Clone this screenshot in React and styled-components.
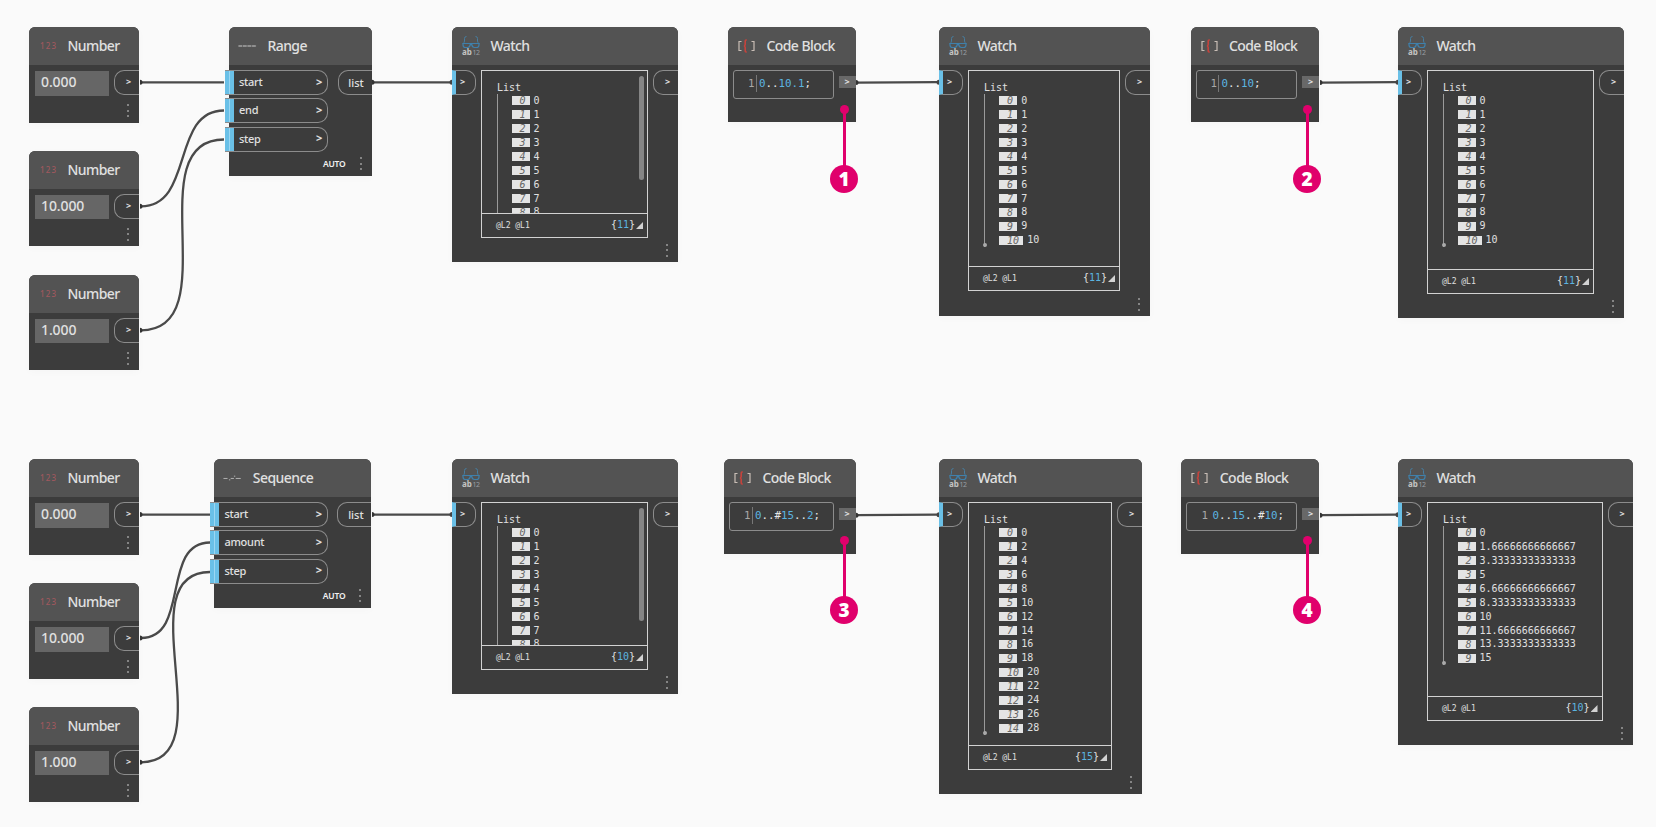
import React from "react";
import styled, { createGlobalStyle, css } from "styled-components";

const C = {
  page: "#fafafa",
  head: "#535353",
  body: "#3c3c3c",
  line: "#8c8c8c",
  wire: "#4a4a4a",
  blue: "#6ac0e7",
  text: "#e0e0e0",
  pink: "#e0006c",
};
const UI = `"Noto Sans", "Open Sans", sans-serif`;
const MONO = `"DejaVu Sans Mono", "Liberation Mono", monospace`;

const Global = createGlobalStyle`
  * { box-sizing: border-box; }
  body { margin: 0; background: ${C.page}; font-family: ${UI}; color: ${C.text}; }
`;

const Canvas = styled.main`
  position: relative;
  width: 1656px;
  height: 827px;
  overflow: hidden;
  background: ${C.page};
`;

const NodeCard = styled.section`
  position: absolute;
  left: ${(p) => p.$x}px;
  top: ${(p) => p.$y}px;
  width: ${(p) => p.$w}px;
  height: ${(p) => p.$h}px;
  display: flex;
  flex-direction: column;
  background: ${C.body};
  border-radius: 6px 6px 0 0;
  box-shadow: 0 2px 8px rgba(0, 0, 0, 0.025);
`;

const Header = styled.header`
  display: flex;
  align-items: center;
  flex: none;
  height: 38px;
  padding-left: 9px;
  background: ${C.head};
  border-radius: 6px 6px 0 0;
`;

const IconBox = styled.div`
  display: flex;
  width: 20px;
  height: 20px;
  margin-right: 9.4px;
`;

const Title = styled.h2`
  margin: 0;
  font-size: 14px;
  line-height: 20px;
  font-weight: 500;
  letter-spacing: -0.55px;
  white-space: nowrap;
`;

const Body = styled.div`
  display: flex;
  flex: 1;
  align-items: flex-start;
  justify-content: space-between;
  padding: ${(p) => p.$pad ?? "5px 0 0"};
`;

const portBase = css`
  display: flex;
  align-items: center;
  height: 25px;
  padding-bottom: 1px;
  border: 1px solid ${C.line};
  flex: none;
`;

const OutPort = styled.div`
  ${portBase}
  width: ${(p) => p.$w ?? 25}px;
  justify-content: center;
  padding-left: ${(p) => (p.$w ? 2 : 3)}px;
  border-right: 0;
  border-radius: 10px 0 0 10px;
  font-size: 11px;
  font-weight: 500;
`;

const InPort = styled.div`
  ${portBase}
  width: 24px;
  padding-left: 4px;
  border-left: 4px solid ${C.blue};
  border-radius: 0 10px 10px 0;
`;

const Arrow = styled.span`
  font-family: ${UI};
  font-size: ${(p) => p.$size ?? 9}px;
  line-height: 12px;
  font-weight: 700;
`;

const PortList = styled.div`
  display: flex;
  flex-direction: column;
  gap: 3.4px;
  margin-left: -4px;
`;

const NamedPort = styled.div`
  ${portBase}
  justify-content: space-between;
  width: ${(p) => p.$w}px;
  padding: 0 5px 2px 5px;
  border-left: 0;
  border-radius: 0 10px 10px 0;
  font-size: 11px;
  font-weight: 500;
  letter-spacing: -0.25px;
`;

const PortTab = styled.i`
  align-self: stretch;
  width: 9px;
  margin: 0 5px -2px -5px;
  background: linear-gradient(90deg, ${C.blue} 4px, #9bd6f2 4px, #9bd6f2 5px, ${C.blue} 5px);
`;

const PortLabel = styled.span`
  flex: 1;
`;

const NumberField = styled.div`
  width: 73.5px;
  height: 24.5px;
  margin-top: 1px;
  padding-left: 6px;
  background: #666;
  font-size: 14px;
  line-height: 21px;
  font-weight: 500;
  letter-spacing: -0.1px;
`;

const Foot = styled.footer`
  display: flex;
  flex: none;
  justify-content: flex-end;
  align-items: center;
  height: 24px;
  padding-right: 10px;
  gap: 14px;
  font-size: 8.5px;
  font-weight: 600;
  letter-spacing: -0.2px;
  color: #f2f2f2;
`;

const Kebab = styled.div`
  display: flex;
  flex-direction: column;
  gap: 3.5px;
  i {
    width: 2px;
    height: 2px;
    background: #858585;
  }
`;

const Panel = styled.div`
  display: flex;
  flex-direction: column;
  flex: 1;
  height: ${(p) => p.$h}px;
  margin: 0 5px;
  border: 1px solid #d2d2d2;
  font-family: ${MONO};
`;

const Tree = styled.div`
  display: flex;
  justify-content: space-between;
  flex: 1;
  min-height: 0;
  overflow: hidden;
  padding: 10px 3px 0 15px;
`;

const TreeTitle = styled.div`
  height: 13px;
  padding-left: 0;
  font-size: 10px;
  line-height: 14px;
`;

const Rows = styled.div`
  position: relative;
  padding: 0 0 0 13.5px;
  border-left: 1px solid #9a9a9a;
`;

const EndDot = styled.i`
  position: absolute;
  left: -2.5px;
  bottom: 0;
  width: 4px;
  height: 4px;
  border-radius: 50%;
  background: #aaa;
`;

const Row = styled.div`
  display: flex;
  align-items: center;
  gap: 4px;
  height: 13.95px;
  font-size: 10px;
  line-height: 14px;
  white-space: nowrap;
`;

const Index = styled.em`
  height: 9px;
  padding: 0 4px 0 ${(p) => p.$pad}px;
  background: #e4e4e4;
  color: #666;
  line-height: 9px;
`;

const Scrollbar = styled.i`
  flex: none;
  width: 5px;
  height: ${(p) => p.$h}px;
  margin-top: -5px;
  border-radius: 3px;
  background: #858585;
`;

const PanelFoot = styled.div`
  display: flex;
  align-items: center;
  flex: none;
  height: 24px;
  padding: 0 4px 0 14px;
  border-top: 1px solid #d2d2d2;
  font-size: 8px;
`;

const Count = styled.span`
  margin-left: auto;
  padding-bottom: 2px;
  font-size: 10px;
  b {
    font-weight: 400;
    color: #5bb4e0;
  }
`;

const Grip = styled.i`
  width: 7px;
  height: 7px;
  margin-left: 1px;
  background: #d2d2d2;
  clip-path: polygon(100% 0, 100% 100%, 0 100%);
`;

const CodeBox = styled.div`
  display: flex;
  flex: 1;
  align-items: center;
  height: 29px;
  padding: 0 0 3px ${(p) => p.$indent}px;
  margin-right: 5px;
  border: 1px solid #8c8c8c;
  border-radius: 3px;
  font-family: ${MONO};
  font-size: 10.8px;
  color: #e8e8e8;
  b {
    font-weight: 400;
    color: #5bb4e0;
  }
`;

const LineNo = styled.span`
  padding-right: 1px;
  margin-right: 2.5px;
  border-right: 1px solid ${(p) => (p.$rule ? "#777" : "transparent")};
  color: #a8a8a8;
  line-height: 17px;
`;

const CodePort = styled.div`
  display: flex;
  align-items: center;
  justify-content: center;
  width: 17px;
  height: 12px;
  margin-top: 6px;
  background: #686868;
`;

const Overlay = styled.svg`
  position: absolute;
  inset: 0;
  pointer-events: none;
`;

const Pin = styled.div`
  position: absolute;
  left: ${(p) => p.$x}px;
  top: ${(p) => p.$y}px;
  width: 28px;
  display: flex;
  flex-direction: column;
  align-items: center;
`;

const PinDot = styled.i`
  width: 9px;
  height: 9px;
  border-radius: 50%;
  background: ${C.pink};
`;

const PinStem = styled.i`
  width: 3px;
  height: ${(p) => p.$h}px;
  margin: -2px 0 -1px;
  background: ${C.pink};
`;

const PinBadge = styled.span`
  width: 28px;
  height: 28px;
  border-radius: 50%;
  background: ${C.pink};
  color: #fff;
  font-size: 19px;
  font-weight: 900;
  line-height: 28px;
  text-align: center;
`;

const WatchIcon = () => (
  <svg width="20" height="20" viewBox="0 0 20 20" fill="none">
    <path d="M5.500 0.500 Q3.500 0.500 3.500 2.500 V5 Q3.500 6.500 1.500 8 M14.500 0.500 Q16.500 0.500 16.500 2.500 V5 Q16.500 6.500 18.500 8" stroke="#477d9f" />
    <path d="M1.500 7.500 H18.500 M2 7.500 V9 Q2 11.500 4.500 11.500 H6.500 Q8.800 11.500 9.200 8.700 H10.800 Q11.200 11.500 13.500 11.500 H15.500 Q18 11.500 18 9 V7.500" stroke="#3f80ab" strokeWidth="1.200" />
    <text x="1" y="18.500" fontFamily="Noto Sans" fontSize="8" fontWeight="700" fill="#c4c4c4">ab</text>
    <text x="11.500" y="18.500" fontFamily="Noto Sans" fontSize="7" fill="#9a9fa3" textLength="7.500">12</text>
  </svg>
);

const NumberIcon = () => (
  <svg width="20" height="20" viewBox="0 0 20 20">
    <text x="2" y="12.800" fontFamily="Noto Sans" fontSize="8" fontWeight="500" fill="#a0585e" textLength="16">123</text>
  </svg>
);

const CodeIcon = () => (
  <svg width="20" height="20" viewBox="0 0 20 20" fill="none">
    <path d="M4.500 5.500 H2 V14.500 H4.500 M14.500 5.500 H17 V14.500 H14.500" stroke="#c8bdb5" strokeWidth="1.200" />
    <path d="M9.800 4 H9 Q8.200 4 8.200 5 V8.500 L7.500 10 L8.200 11.500 V15 Q8.200 16 9 16 H9.800" stroke="#c4433c" strokeWidth="1.600" />
  </svg>
);

const RangeIcon = () => (
  <svg width="22" height="20" viewBox="0 0 22 20">
    <path d="M0.500 10 H20" stroke="#777" strokeWidth="1.200" />
    <path d="M0.500 10 H20" stroke="#b8b8b8" strokeWidth="1.200" strokeDasharray="4 1" />
  </svg>
);

const SequenceIcon = () => (
  <svg width="22" height="20" viewBox="0 0 22 20">
    <path d="M0.500 10.500 H5 M6.500 12 H8 M8.500 10.500 H12 M12 8 H13.500 M14 10.500 H19.500" stroke="#b0b0b0" strokeWidth="1.100" />
  </svg>
);

const Dots = () => (
  <Kebab>
    <i />
    <i />
    <i />
  </Kebab>
);

const NodeHeader = ({ icon, title }) => (
  <Header>
    <IconBox>{icon}</IconBox>
    <Title>{title}</Title>
  </Header>
);

const NumberNode = ({ x, y, value }) => (
  <NodeCard $x={x} $y={y} $w={110} $h={95.5}>
    <NodeHeader icon={<NumberIcon />} title="Number" />
    <Body $pad="5px 0 0 6px">
      <NumberField>{value}</NumberField>
      <OutPort>
        <Arrow>&gt;</Arrow>
      </OutPort>
    </Body>
    <Foot>
      <Dots />
    </Foot>
  </NodeCard>
);

const RangeNode = ({ x, y, w, portWidth, title, icon, ports }) => (
  <NodeCard $x={x} $y={y} $w={w} $h={148.5}>
    <NodeHeader icon={icon} title={title} />
    <Body>
      <PortList>
        {ports.map((name) => (
          <NamedPort key={name} $w={portWidth}>
            <PortTab />
            <PortLabel>{name}</PortLabel>
            <Arrow $size={11}>&gt;</Arrow>
          </NamedPort>
        ))}
      </PortList>
      <OutPort $w={34}>list</OutPort>
    </Body>
    <Foot>
      <span>AUTO</span>
      <Dots />
    </Foot>
  </NodeCard>
);

const WatchNode = ({ x, y, w, h, panelHeight, values, count, scroll, pad = 8 }) => (
  <NodeCard $x={x} $y={y} $w={w} $h={h}>
    <NodeHeader icon={<WatchIcon />} title="Watch" />
    <Body>
      <InPort>
        <Arrow>&gt;</Arrow>
      </InPort>
      <Panel $h={panelHeight}>
        <Tree>
          <div>
            <TreeTitle>List</TreeTitle>
            <Rows>
              {values.map((v, i) => (
                <Row key={i}>
                  <Index $pad={pad}>{i}</Index>
                  <span>{v}</span>
                </Row>
              ))}
              {!scroll && <EndDot />}
            </Rows>
          </div>
          {scroll && <Scrollbar $h={scroll} />}
        </Tree>
        <PanelFoot>
          <span>@L2 @L1</span>
          <Count>
            {"{"}
            <b>{count}</b>
            {"}"}
          </Count>
          <Grip />
        </PanelFoot>
      </Panel>
      <OutPort>
        <Arrow>&gt;</Arrow>
      </OutPort>
    </Body>
    <Foot>
      <Dots />
    </Foot>
  </NodeCard>
);

// Digits take the number colour, every other character the plain text colour.
const highlight = (code) =>
  code.split(/(\d+(?:\.\d+)?)/).map((part, i) => (i % 2 ? <b key={i}>{part}</b> : part));

const CodeNode = ({ x, y, w, code, indent = 14, rule = true }) => (
  <NodeCard $x={x} $y={y} $w={w} $h={95}>
    <NodeHeader icon={<CodeIcon />} title="Code Block" />
    <Body $pad="5px 0 0 5px">
      <CodeBox $indent={indent}>
        <LineNo $rule={rule}>1</LineNo>
        <span>{highlight(code)}</span>
      </CodeBox>
      <CodePort>
        <Arrow>&gt;</Arrow>
      </CodePort>
    </Body>
  </NodeCard>
);

const WIRES = [
  [141, 82.3, 224, 82.3],
  [141, 206.3, 224, 110.5],
  [141, 330.3, 224, 139.5],
  [373, 82.3, 450, 82.3],
  [857, 82.6, 937, 82.2],
  [1321, 82.6, 1396, 82.2],
  [141, 514.6, 210, 514.6],
  [141, 638, 210, 542.5],
  [141, 762.3, 210, 572],
  [373, 514.6, 450, 514.6],
  [857, 515.2, 937, 514.7],
  [1321, 515.2, 1396, 514.7],
];

const Wires = () => (
  <Overlay width="1656" height="827" viewBox="0 0 1656 827" fill="none">
    {WIRES.map(([x1, y1, x2, y2], i) => {
      const d = Math.hypot(x2 - x1, y2 - y1) * 0.42;
      return (
        <g key={i}>
          <path d={`M${x1} ${y1} C${x1 + d} ${y1} ${x2 - d} ${y2} ${x2} ${y2}`} stroke={C.wire} strokeWidth="2.3" />
          <path d={`M${x1 - 1} ${y1 - 2.5} a2.500 2.500 0 0 1 0 5 z`} fill="#333" />
          {x2 > 400 && <path d={`M${x2 + 2} ${y2 - 2.5} a2.500 2.500 0 0 0 0 5 z`} fill="#444" />}
        </g>
      );
    })}
  </Overlay>
);

const Callout = ({ x, y, stem, children }) => (
  <Pin $x={x} $y={y}>
    <PinDot />
    <PinStem $h={stem} />
    <PinBadge>{children}</PinBadge>
  </Pin>
);

const upTo = (n, step = 1) => Array.from({ length: n }, (_, i) => String(i * step));
const FRACTIONS = [
  "0",
  "1.66666666666667",
  "3.33333333333333",
  "5",
  "6.66666666666667",
  "8.33333333333333",
  "10",
  "11.6666666666667",
  "13.3333333333333",
  "15",
];

export default function App() {
  return (
    <Canvas>
      <Global />
      <NumberNode x={29} y={27} value="0.000" />
      <NumberNode x={29} y={150.6} value="10.000" />
      <NumberNode x={29} y={274.5} value="1.000" />
      <RangeNode x={229} y={27} w={142.5} portWidth={103} title="Range" icon={<RangeIcon />} ports={["start", "end", "step"]} />
      <WatchNode x={452} y={27} w={226} h={235} panelHeight={168} values={upTo(9)} count="11" scroll={104} />
      <CodeNode x={728} y={27} w={127.5} code="0..10.1;" />
      <WatchNode x={939} y={27} w={211} h={289} panelHeight={221} values={upTo(11)} count="11" pad={8.6} />
      <CodeNode x={1190.5} y={27} w={128.5} code="0..10;" />
      <WatchNode x={1398} y={27} w={226} h={291} panelHeight={224} values={upTo(11)} count="11" />

      <NumberNode x={29} y={459} value="0.000" />
      <NumberNode x={29} y={583} value="10.000" />
      <NumberNode x={29} y={706.6} value="1.000" />
      <RangeNode x={214.4} y={459} w={157} portWidth={117.5} title="Sequence" icon={<SequenceIcon />} ports={["start", "amount", "step"]} />
      <WatchNode x={452} y={459} w={226} h={235} panelHeight={168} values={upTo(9)} count="10" scroll={113} />
      <CodeNode x={724} y={459} w={131.5} code="0..#15..2;" />
      <WatchNode x={939} y={459} w={203} h={335} panelHeight={268} values={upTo(15, 2)} count="15" pad={8.6} />
      <CodeNode x={1181.4} y={459} w={137.6} code="0..15..#10;" rule={false} />
      <WatchNode x={1398} y={459} w={234.5} h={286} panelHeight={219} values={FRACTIONS} count="10" />

      <Wires />
      <Callout x={830} y={105} stem={54}>1</Callout>
      <Callout x={1293} y={105} stem={54}>2</Callout>
      <Callout x={830} y={536} stem={54}>3</Callout>
      <Callout x={1293} y={536} stem={54}>4</Callout>
    </Canvas>
  );
}
